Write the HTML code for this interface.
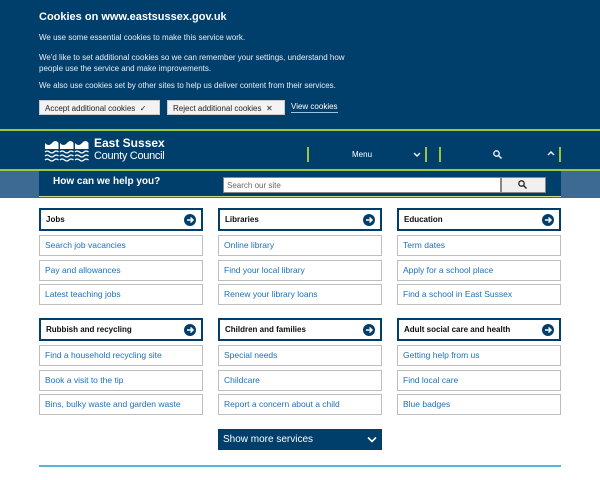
<!DOCTYPE html>
<html><head><style>
*{box-sizing:border-box;margin:0;padding:0}
body{width:600px;height:480px;overflow:hidden;background:#fff;font-family:"Liberation Sans",sans-serif;position:relative}
.a{position:absolute}
.cook{left:0;top:0;width:600px;height:129px;background:#003f6b;color:#fff}
.cook p{position:absolute;left:39px;font-size:8px;color:#e8eef4}
.btn{position:absolute;top:100px;height:15px;background:#f3f3f3;color:#222;font-size:8px;line-height:15px;padding-left:5px;border:1px solid #ccc}
.g{background:#9cc43c}
.box{position:absolute;width:164px;border:2px solid #bdbdbd;border-width:1.5px;font-size:8.5px;color:#1d70b8;padding-left:5px;background:#fff}
.h{border:2px solid #003f6b;color:#0b0c0c;font-weight:bold;font-size:8px}
.arr{position:absolute;right:5px;top:4px;width:12px;height:12px;border-radius:50%;background:#003f6b}
</style></head><body>
<div class="a cook">
<div class="a" style="left:39px;top:11px;font-size:11px;font-weight:bold">Cookies on www.eastsussex.gov.uk</div>
<p style="top:33px">We use some essential cookies to make this service work.</p>
<p style="top:52px;line-height:11px">We'd like to set additional cookies so we can remember your settings, understand how<br>people use the service and make improvements.</p>
<p style="top:81px">We also use cookies set by other sites to help us deliver content from their services.</p>
<div class="btn" style="left:39px;width:121px">Accept additional cookies &nbsp;✓</div>
<div class="btn" style="left:167px;width:118px">Reject additional cookies &nbsp;✕</div>
<div class="a" style="left:291px;top:101px;font-size:8px;color:#fff;border-bottom:1px solid #9cc4e4;line-height:11px">View cookies</div>
</div>
<div class="a g" style="left:0;top:129px;width:600px;height:2px"></div>
<div class="a" style="left:0;top:131px;width:600px;height:38px;background:#003f6b"></div>
<svg class="a" style="left:44px;top:140px" width="46" height="22" viewBox="0 0 46 22"><path d="M1 3q3.5 4 7 0t6.5 0V9H1z M16 3q3.5 4 7 0t6.5 0V9H16z M31 3q3.5 4 7 0t6.5 0V9H31z" fill="#fff"/><path d="M1 12q2-2 4.5 0t4.5 0 4.5 0 M16 12q2-2 4.5 0t4.5 0 4.5 0 M31 12q2-2 4.5 0t4.5 0 4.5 0 M1 16q2-2 4.5 0t4.5 0 4.5 0 M16 16q2-2 4.5 0t4.5 0 4.5 0 M31 16q2-2 4.5 0t4.5 0 4.5 0 M1 20q2-2 4.5 0t4.5 0 4.5 0 M16 20q2-2 4.5 0t4.5 0 4.5 0 M31 20q2-2 4.5 0t4.5 0 4.5 0" stroke="#fff" stroke-width="1.3" fill="none"/></svg>
<div class="a" style="left:94px;top:137px;color:#fff;font-size:12px;font-weight:bold;line-height:13px">East Sussex</div>
<div class="a" style="left:94px;top:150px;color:#fff;font-size:11px;line-height:13px;letter-spacing:-0.3px">County Council</div>
<div class="a g" style="left:307px;top:147px;width:2px;height:15px"></div>
<div class="a" style="left:352px;top:150px;color:#fff;font-size:8px">Menu</div>
<svg class="a" style="left:413px;top:152px" width="8" height="6"><path d="M1 1L4 4L7 1" stroke="#fff" stroke-width="1.4" fill="none"/></svg>
<div class="a g" style="left:425px;top:147px;width:2px;height:15px"></div>
<div class="a g" style="left:439px;top:147px;width:2px;height:15px"></div>
<svg class="a" style="left:493px;top:150px" width="9" height="9"><circle cx="3.5" cy="3.5" r="2.7" stroke="#fff" stroke-width="1.3" fill="none"/><path d="M5.5 5.5L8.5 8.5" stroke="#fff" stroke-width="1.4"/></svg>
<svg class="a" style="left:547px;top:150px" width="8" height="6"><path d="M1 5L4 2L7 5" stroke="#fff" stroke-width="1.4" fill="none"/></svg>
<div class="a g" style="left:559px;top:147px;width:2px;height:15px"></div>
<div class="a g" style="left:0;top:169px;width:600px;height:2px"></div>
<div class="a" style="left:0;top:171px;width:600px;height:27px;background:#3d6a92"></div>
<div class="a" style="left:39px;top:171px;width:522px;height:26px;background:#003f6b;border-bottom:1px solid #c9d88a"></div>
<div class="a" style="left:53px;top:176px;color:#fff;font-size:10px;font-weight:bold">How can we help you?</div>
<div class="a" style="left:223px;top:177px;width:278px;height:16px;background:#fff;border:1px solid #888;font-size:8px;color:#666;padding:3px 3px">Search our site</div>
<div class="a" style="left:501px;top:177px;width:45px;height:16px;background:#f0f0f0;border:1px solid #888"></div>
<svg class="a" style="left:518px;top:180px" width="9" height="9"><circle cx="3.5" cy="3.5" r="2.7" stroke="#222" stroke-width="1.3" fill="none"/><path d="M5.5 5.5L8.5 8.5" stroke="#222" stroke-width="1.4"/></svg>

<div id="grid"></div>
<div class="a" style="left:218px;top:429px;width:164px;height:21px;background:#003f6b;color:#fff;font-size:10px;padding:5px 5px">Show more services</div>
<svg class="a" style="left:367px;top:436px" width="10" height="7"><path d="M1 1.5L5 5.5L9 1.5" stroke="#fff" stroke-width="1.6" fill="none"/></svg>
<div class="a" style="left:39px;top:465px;width:522px;height:2px;background:#5ab4e0"></div>
<script>
var cols=[39,218,397],data=[
[208,["Jobs","Search job vacancies","Pay and allowances","Latest teaching jobs"],["Libraries","Online library","Find your local library","Renew your library loans"],["Education","Term dates","Apply for a school place","Find a school in East Sussex"]],
[318,["Rubbish and recycling","Find a household recycling site","Book a visit to the tip","Bins, bulky waste and garden waste"],["Children and families","Special needs","Childcare","Report a concern about a child"],["Adult social care and health","Getting help from us","Find local care","Blue badges"]]];
var h="";data.forEach(function(r){var y=r[0];for(var c=0;c<3;c++){var L=r[c+1];var x=cols[c];
h+='<div class="box h" style="left:'+x+'px;top:'+y+'px;height:23px;line-height:19px">'+L[0]+'<div class="arr"><svg width="12" height="12"><path d="M3 6h6M6.5 3.5L9 6 6.5 8.5" stroke="#fff" stroke-width="1.5" fill="none"/></svg></div></div>';
for(var i=1;i<4;i++){h+='<div class="box" style="left:'+x+'px;top:'+(y+27+(i-1)*24.5)+'px;height:21px;line-height:18px">'+L[i]+'</div>';}}});
document.getElementById("grid").innerHTML=h;
</script>
</body></html>
